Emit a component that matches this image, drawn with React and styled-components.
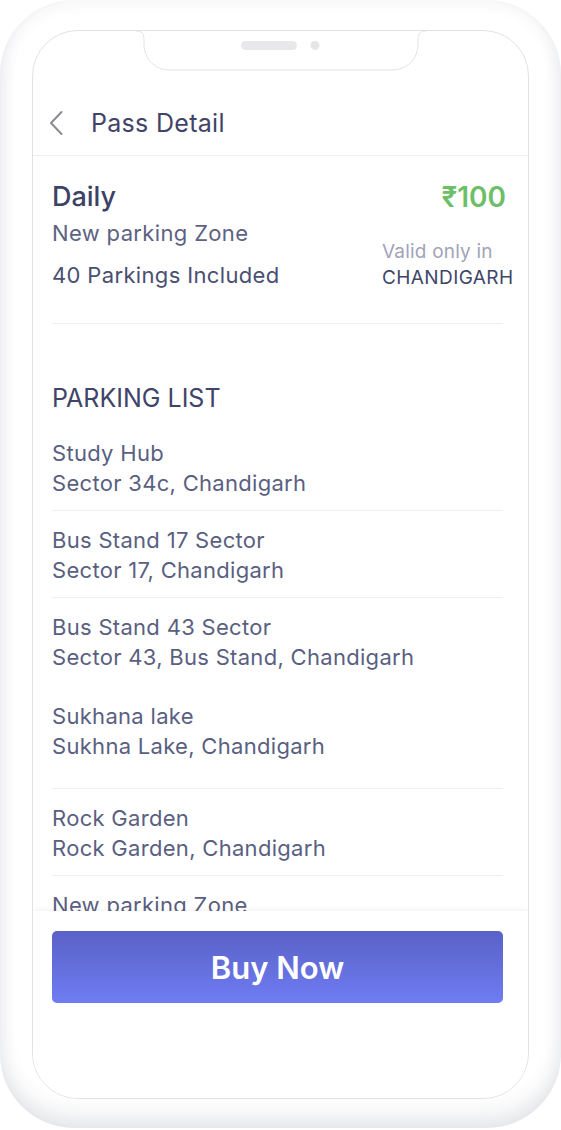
import React from "react";
import styled, { createGlobalStyle } from "styled-components";

const GlobalStyle = createGlobalStyle`
  * { box-sizing: border-box; }
  body {
    margin: 0;
    background: #ffffff;
    font-family: "Inter", "Noto Sans", sans-serif;
  }
`;

const Device = styled.div`
  width: 561px;
  height: 1128px;
  padding: 30px 32px 29px 32px;
  border-radius: 74px;
  background: #ffffff;
  box-shadow: inset 0 0 18px rgba(40, 50, 80, 0.08),
    inset 0 -16px 20px rgba(40, 50, 80, 0.08);
  display: flex;
`;

const Screen = styled.div`
  position: relative;
  flex: 1;
  display: flex;
  flex-direction: column;
  border: 1px solid #e2e2e6;
  border-radius: 46px;
  background: #ffffff;
  overflow: hidden;
`;

const StatusBar = styled.div`
  height: 40px;
  flex-shrink: 0;
`;

const Notch = styled.svg`
  position: absolute;
  top: -1px;
  left: 50%;
  transform: translateX(-50%);
`;

const Header = styled.div`
  display: flex;
  align-items: center;
  gap: 28px;
  padding: 32px 0 12px 16px;
  border-bottom: 1px solid #efeff2;
  flex-shrink: 0;
`;

const Title = styled.span`
  font-size: 25px;
  line-height: 40px;
  letter-spacing: 0.3px;
  color: #3f4468;
`;

const Content = styled.div`
  flex: 1;
  overflow: hidden;
  padding: 0 25px 0 19px;
`;

const Summary = styled.div`
  display: flex;
  justify-content: space-between;
  padding: 25px 0 32px;
  border-bottom: 1px solid #f0f0f3;
`;

const Column = styled.div`
  display: flex;
  flex-direction: column;
  align-items: ${(p) => (p.$end ? "flex-end" : "flex-start")};
`;

const PassName = styled.div`
  font-size: 27px;
  line-height: 32px;
  font-weight: 500;
  color: #3c4266;
`;

const Line = styled.div`
  font-size: 22px;
  line-height: 30px;
  letter-spacing: 0.35px;
  color: ${(p) => (p.$dark ? "#4a4f72" : "#5d6282")};
  margin-top: ${(p) => p.$mt || 0}px;
`;

const Price = styled.div`
  font-size: 28px;
  line-height: 32px;
  font-weight: 600;
  color: #6cbf68;
  margin: 0 -3px 0 0;
`;

const Validity = styled.div`
  width: 121px;
  margin-top: 26px;
  white-space: nowrap;
`;

const ValidLabel = styled.div`
  font-size: 19px;
  line-height: 26px;
  letter-spacing: 0.2px;
  color: #a0a3b8;
`;

const City = styled.div`
  font-size: 19px;
  line-height: 26px;
  letter-spacing: 0.4px;
  color: #40456a;
`;

const SectionTitle = styled.div`
  margin-top: 59px;
  font-size: 25px;
  line-height: 30px;
  color: #3f4468;
`;

const List = styled.div`
  margin-top: 11px;
`;

const Item = styled.div`
  padding: 14px 0 ${(p) => p.$pb || 12}px;
  border-bottom: 1px solid ${(p) => (p.$noLine ? "transparent" : "#f0f0f3")};
`;

const ItemText = styled.div`
  font-size: 22px;
  line-height: 30px;
  letter-spacing: 0.3px;
  color: #5a5f81;
  white-space: nowrap;
`;

const Footer = styled.div`
  flex-shrink: 0;
  padding: 20px 25px 95px 19px;
  background: #ffffff;
  box-shadow: 0 -2px 4px rgba(30, 40, 70, 0.05);
  position: relative;
`;

const BuyButton = styled.button`
  width: 100%;
  height: 72px;
  border: none;
  border-radius: 5px;
  background: linear-gradient(180deg, #5a62c6 0%, #6f7cf3 100%);
  color: #ffffff;
  font-family: "Inter", "Noto Sans", sans-serif;
  font-size: 31px;
  font-weight: 600;
  cursor: pointer;
`;

const parkings = [
  { name: "Study Hub", address: "Sector 34c, Chandigarh" },
  { name: "Bus Stand 17 Sector", address: "Sector 17, Chandigarh" },
  { name: "Bus Stand 43 Sector", address: "Sector 43, Bus Stand, Chandigarh", noLine: true, pb: 14 },
  { name: "Sukhana lake", address: "Sukhna Lake, Chandigarh", pb: 27 },
  { name: "Rock Garden", address: "Rock Garden, Chandigarh" },
  { name: "New parking Zone", address: "Sector 22, Chandigarh" },
];

function NotchShape() {
  return (
    <Notch width="290" height="42" viewBox="0 0 290 42">
      <path
        d="M0 1 L0 0 L290 0 L290 1 C284 1 282 4 282 10 L282 14 C282 29 271 40 256 40 L34 40 C19 40 8 29 8 14 L8 10 C8 4 6 1 0 1 Z"
        fill="#ffffff"
      />
      <path
        d="M0 1 C6 1 8 4 8 10 L8 14 C8 29 19 40 34 40 L256 40 C271 40 282 29 282 14 L282 10 C282 4 284 1 290 1"
        fill="none"
        stroke="#e2e2e6"
        strokeWidth="1"
      />
      <rect x="105" y="11" width="56" height="9" rx="4.5" fill="#e8e8eb" />
      <circle cx="179" cy="15.5" r="4.5" fill="#e6e6e9" />
    </Notch>
  );
}

function BackIcon() {
  return (
    <svg width="14" height="26" viewBox="0 0 14 26">
      <path d="M12.5 2 L2 13 L12.5 24" fill="none" stroke="#8b8b90" strokeWidth="2" strokeLinecap="round" strokeLinejoin="round" />
    </svg>
  );
}

export default function App() {
  return (
    <>
      <GlobalStyle />
      <Device>
        <Screen>
          <StatusBar />
          <NotchShape />
          <Header>
            <BackIcon />
            <Title>Pass Detail</Title>
          </Header>
          <Content>
            <Summary>
              <Column>
                <PassName>Daily</PassName>
                <Line $mt={5}>New parking Zone</Line>
                <Line $dark $mt={12}>40 Parkings Included</Line>
              </Column>
              <Column $end>
                <Price>₹100</Price>
                <Validity>
                  <ValidLabel>Valid only in</ValidLabel>
                  <City>CHANDIGARH</City>
                </Validity>
              </Column>
            </Summary>
            <SectionTitle>PARKING LIST</SectionTitle>
            <List>
              {parkings.map((p) => (
                <Item key={p.name} $noLine={p.noLine} $pb={p.pb}>
                  <ItemText>{p.name}</ItemText>
                  <ItemText>{p.address}</ItemText>
                </Item>
              ))}
            </List>
          </Content>
          <Footer>
            <BuyButton>Buy Now</BuyButton>
          </Footer>
        </Screen>
      </Device>
    </>
  );
}
